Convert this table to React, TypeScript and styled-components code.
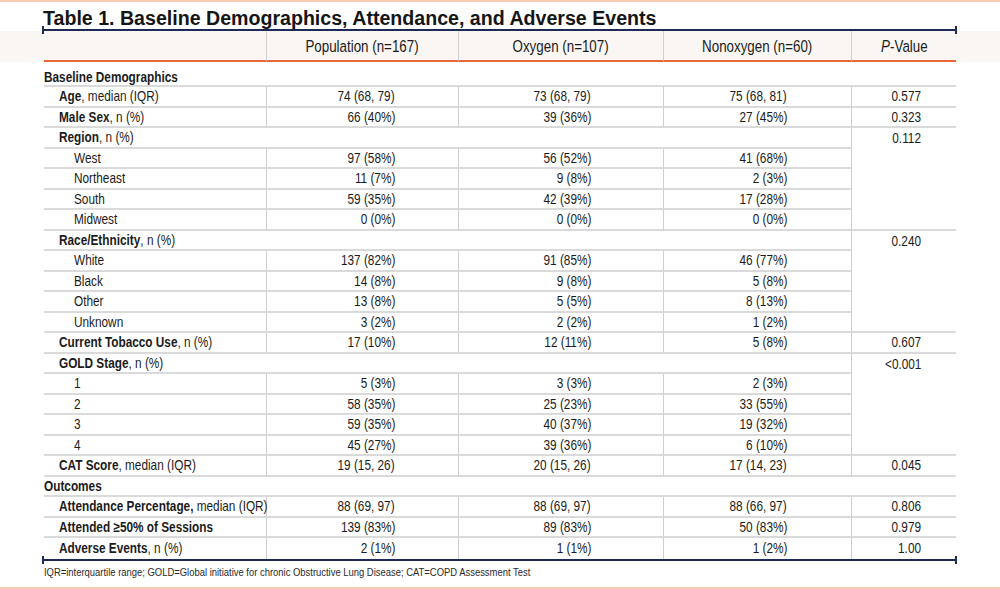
import React from "react";
import styled, { createGlobalStyle } from "styled-components";

const Global = createGlobalStyle`
  html, body { margin: 0; padding: 0; background: #ffffff; }
  body { width: 1000px; height: 589px; overflow: hidden; }
`;

const SANS = `"Liberation Sans", Arial, sans-serif`;

const Page = styled.div`
  width: 1000px;
  height: 589px;
  box-sizing: border-box;
  border-top: 2px solid #f9cbb3;
  border-bottom: 2px solid #f9cbb3;
  display: flex;
  flex-direction: column;
  color: #1b1b1b;
`;

const Title = styled.h1`
  margin: 0;
  padding: 5px 0 0 43px;
  height: 27px;
  box-sizing: border-box;
  font-family: ${SANS};
  font-weight: 700;
  font-size: 19.6px;
  line-height: 22px;
  color: #151515;
  white-space: nowrap;
`;

const Rule = styled.div`
  position: relative;
  margin-left: 42px;
  width: 915px;
  height: 2px;
  background: #1d2a55;
  flex: none;
  &::before,
  &::after {
    content: "";
    position: absolute;
    top: -3px;
    width: 2px;
    height: 8px;
    background: #1d2a55;
  }
  &::before { left: 0; }
  &::after { right: 0; }
`;

/* Arial Narrow is not installed: condense Liberation Sans horizontally */
const Narrow = styled.span<{ $origin: "left" | "right" | "center" }>`
  display: inline-block;
  transform: scaleX(0.82);
  transform-origin: ${(p) => p.$origin} center;
  white-space: nowrap;
`;

const HeaderBand = styled.div`
  background: #faf6f4;
  height: 31px;
  flex: none;
`;

const Table = styled.table`
  margin-left: 44px;
  width: 912px;
  table-layout: fixed;
  border-collapse: separate;
  border-spacing: 0;
  font-family: ${SANS};
`;

const HeadCell = styled.th<{ $divider?: boolean }>`
  height: 29px;
  padding: 0;
  font-weight: 400;
  font-size: 16.3px;
  line-height: 18px;
  text-align: center;
  vertical-align: middle;
  border-bottom: 2px solid #e9653a;
  border-left: ${(p) => (p.$divider ? "1px solid #cfcfcf" : "none")};
  color: #1b1b1b;
  overflow: visible;
`;

const Row = styled.tr<{ $tall?: boolean }>`
  height: ${(p) => (p.$tall ? "25px" : "20.5px")};
`;

const LabelCell = styled.td<{ $indent: number; $noLine?: boolean; $tall?: boolean }>`
  padding: ${(p) => (p.$tall ? "7px" : "0")} 0 0 ${(p) => p.$indent}px;
  font-size: 14.4px;
  line-height: 16px;
  white-space: nowrap;
  overflow: visible;
  vertical-align: ${(p) => (p.$tall ? "top" : "middle")};
  border-bottom: ${(p) => (p.$noLine ? "none" : "2px solid #dadada")};
`;

const ValueCell = styled.td<{ $pad: number; $noLine?: boolean; $top?: boolean }>`
  padding: 0 ${(p) => p.$pad}px 0 0;
  font-size: 14.4px;
  line-height: 16px;
  text-align: right;
  white-space: nowrap;
  vertical-align: ${(p) => (p.$top ? "top" : "middle")};
  border-left: 1px solid #cfcfcf;
  border-bottom: ${(p) => (p.$noLine ? "none" : "2px solid #dadada")};
`;

const SpanPValue = styled(ValueCell)`
  padding-top: 2px;
`;

const Footnote = styled.div`
  margin: 4px 0 0 44px;
  font-family: ${SANS};
  font-size: 11.5px;
  line-height: 14px;
  color: #2a2a2a;
  white-space: nowrap;
`;

const Spacer = styled.div`
  flex: 1;
`;

type Item = {
  kind: "section" | "item" | "group" | "sub";
  bold?: string;
  rest?: string;
  vals?: [string, string, string];
  p?: string;
  span?: number;
};

const rows: Item[] = [
  { kind: "section", bold: "Baseline Demographics" },
  { kind: "item", bold: "Age", rest: ", median (IQR)", vals: ["74 (68, 79)", "73 (68, 79)", "75 (68, 81)"], p: "0.577" },
  { kind: "item", bold: "Male Sex", rest: ", n (%)", vals: ["66 (40%)", "39 (36%)", "27 (45%)"], p: "0.323" },
  { kind: "group", bold: "Region", rest: ", n (%)", p: "0.112", span: 5 },
  { kind: "sub", rest: "West", vals: ["97 (58%)", "56 (52%)", "41 (68%)"] },
  { kind: "sub", rest: "Northeast", vals: ["11 (7%)", "9 (8%)", "2 (3%)"] },
  { kind: "sub", rest: "South", vals: ["59 (35%)", "42 (39%)", "17 (28%)"] },
  { kind: "sub", rest: "Midwest", vals: ["0 (0%)", "0 (0%)", "0 (0%)"] },
  { kind: "group", bold: "Race/Ethnicity", rest: ", n (%)", p: "0.240", span: 5 },
  { kind: "sub", rest: "White", vals: ["137 (82%)", "91 (85%)", "46 (77%)"] },
  { kind: "sub", rest: "Black", vals: ["14 (8%)", "9 (8%)", "5 (8%)"] },
  { kind: "sub", rest: "Other", vals: ["13 (8%)", "5 (5%)", "8 (13%)"] },
  { kind: "sub", rest: "Unknown", vals: ["3 (2%)", "2 (2%)", "1 (2%)"] },
  { kind: "item", bold: "Current Tobacco Use", rest: ", n (%)", vals: ["17 (10%)", "12 (11%)", "5 (8%)"], p: "0.607" },
  { kind: "group", bold: "GOLD Stage", rest: ", n (%)", p: "<0.001", span: 5 },
  { kind: "sub", rest: "1", vals: ["5 (3%)", "3 (3%)", "2 (3%)"] },
  { kind: "sub", rest: "2", vals: ["58 (35%)", "25 (23%)", "33 (55%)"] },
  { kind: "sub", rest: "3", vals: ["59 (35%)", "40 (37%)", "19 (32%)"] },
  { kind: "sub", rest: "4", vals: ["45 (27%)", "39 (36%)", "6 (10%)"] },
  { kind: "item", bold: "CAT Score", rest: ", median (IQR)", vals: ["19 (15, 26)", "20 (15, 26)", "17 (14, 23)"], p: "0.045" },
  { kind: "section", bold: "Outcomes" },
  { kind: "item", bold: "Attendance Percentage,", rest: " median (IQR)", vals: ["88 (69, 97)", "88 (69, 97)", "88 (66, 97)"], p: "0.806" },
  { kind: "item", bold: "Attended \u226550% of Sessions", vals: ["139 (83%)", "89 (83%)", "50 (83%)"], p: "0.979" },
  { kind: "item", bold: "Adverse Events", rest: ", n (%)", vals: ["2 (1%)", "1 (1%)", "1 (2%)"], p: "1.00" },
];

const PADS = [63, 72, 64];
const PPAD = 35;

function Label({ item }: { item: Item }) {
  return (
    <Narrow $origin="left">
      {item.bold && <b>{item.bold}</b>}
      {item.rest}
    </Narrow>
  );
}

const Cols = () => (
  <colgroup>
    <col style={{ width: 222 }} />
    <col style={{ width: 192 }} />
    <col style={{ width: 205 }} />
    <col style={{ width: 188 }} />
    <col style={{ width: 105 }} />
  </colgroup>
);

export default function App() {
  const last = rows.length - 1;
  return (
    <>
      <Global />
      <Page>
        <Title>Table 1. Baseline Demographics, Attendance, and Adverse Events</Title>
        <Rule />
        <HeaderBand>
          <Table>
            <Cols />
            <thead>
              <tr>
                <HeadCell />
                <HeadCell $divider>
                  <Narrow $origin="center">Population (n=167)</Narrow>
                </HeadCell>
                <HeadCell $divider>
                  <Narrow $origin="center">Oxygen (n=107)</Narrow>
                </HeadCell>
                <HeadCell $divider>
                  <Narrow $origin="center">Nonoxygen (n=60)</Narrow>
                </HeadCell>
                <HeadCell $divider>
                  <Narrow $origin="center">
                    <i>P</i>-Value
                  </Narrow>
                </HeadCell>
              </tr>
            </thead>
          </Table>
        </HeaderBand>
        <Table>
          <Cols />
          <tbody>
            {rows.map((r, i) => {
              const isLast = i === last;
              if (r.kind === "section") {
                return (
                  <Row key={i} $tall={i === 0}>
                    <LabelCell $indent={0} $tall={i === 0} colSpan={5}>
                      <Label item={r} />
                    </LabelCell>
                  </Row>
                );
              }
              if (r.kind === "group") {
                return (
                  <Row key={i}>
                    <LabelCell $indent={15} colSpan={4}>
                      <Label item={r} />
                    </LabelCell>
                    <SpanPValue $pad={PPAD} rowSpan={r.span} $top>
                      <Narrow $origin="right">{r.p}</Narrow>
                    </SpanPValue>
                  </Row>
                );
              }
              return (
                <Row key={i}>
                  <LabelCell $indent={r.kind === "sub" ? 30 : 15} $noLine={isLast}>
                    <Label item={r} />
                  </LabelCell>
                  {r.vals!.map((v, j) => (
                    <ValueCell key={j} $pad={PADS[j]} $noLine={isLast}>
                      <Narrow $origin="right">{v}</Narrow>
                    </ValueCell>
                  ))}
                  {r.kind === "item" && (
                    <ValueCell $pad={PPAD} $noLine={isLast}>
                      <Narrow $origin="right">{r.p}</Narrow>
                    </ValueCell>
                  )}
                </Row>
              );
            })}
          </tbody>
        </Table>
        <Rule />
        <Footnote>
          <Narrow $origin="left">
            IQR=interquartile range; GOLD=Global initiative for chronic Obstructive Lung Disease; CAT=COPD Assessment Test
          </Narrow>
        </Footnote>
        <Spacer />
      </Page>
    </>
  );
}
